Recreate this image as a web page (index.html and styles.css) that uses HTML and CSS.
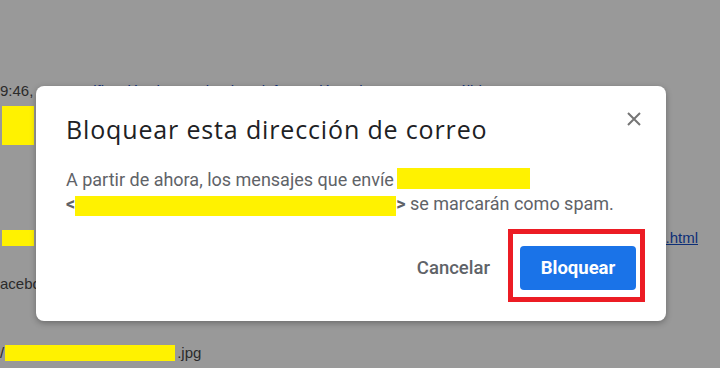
FILE: index.html
```html
<!DOCTYPE html>
<html lang="es">
<head>
    <meta charset="UTF-8">
    <title>Bloquear esta dirección de correo</title>
    <link rel="stylesheet" href="styles.css">
</head>
<body>
    <!-- Página de fondo (oscurecida) -->
    <div class="pagina">
        <div class="fila fila-hora">
            <span>9:46,</span>
            <span class="enlace">notificación de Facebook — información sobre tu cuenta válida</span>
        </div>
        <div class="fila fila-bloque">
            <span class="tachado tachado-alto"></span>
        </div>
        <div class="fila fila-enlace">
            <span class="enlace"><span class="tachado tachado-bajo"></span></span>
            <span class="enlace">.html</span>
        </div>
        <div class="fila fila-texto">acebo</div>
        <div class="fila fila-archivo">
            <span>/</span><span class="tachado tachado-archivo"></span><span>.jpg</span>
        </div>
    </div>

    <!-- Diálogo -->
    <div class="dialogo">
        <div class="dialogo-cabecera">
            <h1 class="dialogo-titulo">Bloquear esta dirección de correo</h1>
            <button class="cerrar" aria-label="Cerrar">
                <svg width="14" height="14" viewBox="0 0 14 14">
                    <path d="M1 1 L13 13 M13 1 L1 13" stroke="#757575" stroke-width="2" fill="none"/>
                </svg>
            </button>
        </div>
        <p class="dialogo-texto">
            A partir de ahora, los mensajes que envíe<span class="tachado tachado-linea1"></span><br>
            <b>&lt;</b><span class="tachado tachado-linea2"></span><b>&gt;</b> se marcarán como spam.
        </p>
        <div class="dialogo-botones">
            <button class="boton-texto">Cancelar</button>
            <button class="boton-azul">Bloquear</button>
        </div>
        <div class="marca-roja"></div>
    </div>
</body>
</html>
```

FILE: styles.css
```css
body {
    margin: 0;
    background: #999999;
    font-family: "Liberation Sans", Arial, sans-serif;
    overflow: hidden;
    width: 720px;
    height: 368px;
    position: relative;
}

/* Página de fondo */
.pagina {
    padding-top: 82px;
    color: #2b2b2b;
    font-size: 15px;
}

.fila {
    display: flex;
    white-space: nowrap;
}

.fila-hora {
    line-height: 18px;
    gap: 39px;
}

.enlace {
    color: #0d2f78;
    text-decoration: underline;
}

.tachado {
    display: inline-block;
    background: #fff200;
}

.fila-bloque {
    margin-top: 6px;
    padding-left: 2px;
}

.tachado-alto {
    width: 32px;
    height: 39px;
}

.fila-enlace {
    margin-top: 84px;
    justify-content: space-between;
    align-items: flex-end;
    padding-right: 22px;
    line-height: 17px;
}

.tachado-bajo {
    width: 32px;
    height: 16px;
    margin-left: 2px;
    margin-right: 2px;
    vertical-align: -3px;
}

.fila-texto {
    margin-top: 29px;
    line-height: 18px;
}

.fila-archivo {
    margin-top: 51px;
    align-items: center;
    line-height: 18px;
}

.tachado-archivo {
    width: 170px;
    height: 16px;
    margin: 0 2px 0 1px;
}

/* Diálogo */
.dialogo {
    position: absolute;
    left: 36px;
    top: 86px;
    width: 570px;
    padding: 27px 30px 31px;
    background: #ffffff;
    border-radius: 8px;
    box-shadow: 0 2px 6px rgba(0,0,0,0.3);
    font-family: Roboto, "Liberation Sans", sans-serif;
}

.dialogo-cabecera {
    display: flex;
    justify-content: space-between;
    align-items: flex-start;
}

.dialogo-titulo {
    margin: 0;
    font-family: "Open Sans", Roboto, sans-serif;
    font-size: 25px;
    font-weight: 400;
    letter-spacing: 0.85px;
    line-height: 32px;
    color: #202124;
}

.cerrar {
    border: none;
    background: none;
    padding: 0;
    margin: -1px -5px 0 0;
    width: 14px;
    height: 14px;
    display: flex;
}

.dialogo-texto {
    margin: 23px 0 0;
    font-size: 18px;
    line-height: 24px;
    color: #5f6368;
}

.dialogo-texto b {
    font-weight: 700;
}

.tachado-linea1 {
    width: 133px;
    height: 21px;
    vertical-align: -3px;
    margin-left: 3px;
}

.tachado-linea2 {
    width: 321px;
    height: 20px;
    vertical-align: -6px;
    margin: 0 0 0 0;
}

.dialogo-botones {
    display: flex;
    justify-content: flex-end;
    gap: 8px;
    margin-top: 30px;
}

.boton-texto,
.boton-azul {
    height: 44px;
    border: none;
    border-radius: 4px;
    font-family: Roboto, "Liberation Sans", sans-serif;
    font-size: 18.5px;
    cursor: pointer;
}

.boton-texto {
    background: none;
    color: #5f6368;
    font-weight: 500;
    padding: 0 22px;
}

.boton-azul {
    background: #1a73e8;
    color: #ffffff;
    font-weight: 700;
    width: 116px;
}

/* Anotación roja sobre el botón */
.marca-roja {
    position: absolute;
    left: 472px;
    top: 143px;
    width: 127px;
    height: 63px;
    border: 5px solid #ec1c24;
}
```
